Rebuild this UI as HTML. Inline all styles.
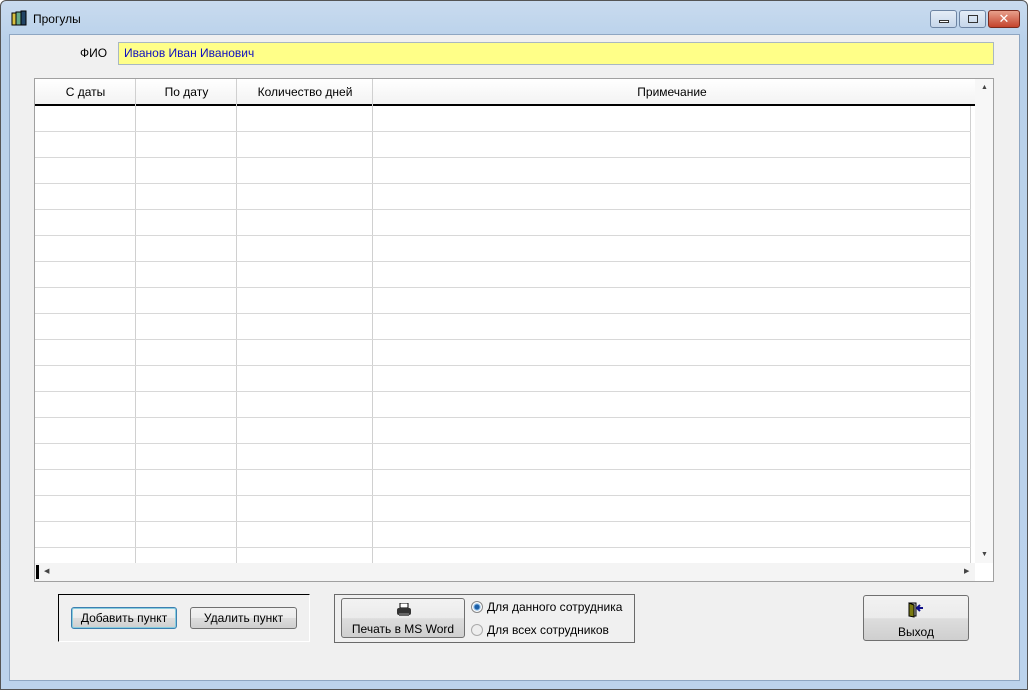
<!DOCTYPE html>
<html><head><meta charset="utf-8"><style>
*{margin:0;padding:0;box-sizing:border-box}
body{width:1028px;height:690px;overflow:hidden;background:#fff;font-family:"Liberation Sans","DejaVu Sans",sans-serif;font-size:12px;color:#000;position:relative}
.frame{position:absolute;left:0;top:0;width:1028px;height:690px;background:linear-gradient(#c9dbef,#b9d1ea 40px,#bcd3ec);border:1px solid #555;border-radius:6px 6px 0 0}
.client{position:absolute;left:9px;top:34px;width:1011px;height:647px;background:#f0f0f0;border:1px solid #8ea6c2}
.abs{position:absolute}
.title{left:33px;top:12px;font-size:12px}
.btnw{top:10px;height:18px;border:1px solid #6d84a3;border-radius:3px;background:linear-gradient(#e4edf7,#c6d6ea)}
.grid{left:34px;top:78px;width:960px;height:504px;background:#fff;border:1px solid #a0a0a0}
.hline{position:absolute;left:0;width:936px;height:1px;background:#d8d8d8}
.vline{position:absolute;top:0;width:1px;height:484px;background:#d0d0d0}
.hdr{position:absolute;top:0;height:27px;line-height:27px;text-align:center;font-size:12px}
.btn{position:absolute;border:1px solid #707070;border-radius:3px;background:linear-gradient(#f2f2f2 0,#ebebeb 50%,#dddddd 51%,#cfcfcf);text-align:center;font-size:12px}
</style></head><body>
<div class="frame"></div>
<svg class="abs" style="left:11px;top:10px" width="18" height="17" viewBox="0 0 18 17"><rect x="1" y="3" width="4" height="12" fill="#d8c040" stroke="#000"/><rect x="5" y="2" width="5" height="13" fill="#6a8" stroke="#000"/><rect x="10" y="1" width="5" height="14" fill="#246" stroke="#000"/></svg>
<div class="abs title">Прогулы</div>
<div class="abs btnw" style="left:930px;width:27px"><div class="abs" style="left:8px;top:9px;width:10px;height:3px;border:1px solid #333;background:#fff"></div></div>
<div class="abs btnw" style="left:959px;width:27px"><div class="abs" style="left:8px;top:4px;width:10px;height:8px;border:1px solid #333"></div></div>
<div class="abs btnw" style="left:988px;width:32px;background:linear-gradient(#e8a08c,#c4432c);border-color:#7a2a1e;color:#fff;font-weight:bold;text-align:center;line-height:16px;font-size:13px">✕</div>
<div class="client"></div>
<div class="abs" style="left:80px;top:46px">ФИО</div>
<div class="abs" style="left:118px;top:42px;width:876px;height:23px;background:#ffff88;border:1px solid #a9b8c2;color:#1010c0;line-height:21px;padding-left:5px">Иванов Иван Иванович</div>
<div class="abs grid">
 <div class="abs" style="left:0;top:0;width:940px;height:27px;background:linear-gradient(#fff,#f3f3f3);border-bottom:2px solid #000"></div>
 <div class="hdr" style="left:0;width:101px">С даты</div>
 <div class="hdr" style="left:101px;width:101px">По дату</div>
 <div class="hdr" style="left:202px;width:136px">Количество дней</div>
 <div class="hdr" style="left:338px;width:598px">Примечание</div>
 <div class="vline" style="left:100px"></div><div class="vline" style="left:201px"></div><div class="vline" style="left:337px"></div><div class="vline" style="left:935px;top:27px;height:457px"></div>
 <div class="hline" style="top:52px"></div><div class="hline" style="top:78px"></div><div class="hline" style="top:104px"></div><div class="hline" style="top:130px"></div><div class="hline" style="top:156px"></div><div class="hline" style="top:182px"></div><div class="hline" style="top:208px"></div><div class="hline" style="top:234px"></div><div class="hline" style="top:260px"></div><div class="hline" style="top:286px"></div><div class="hline" style="top:312px"></div><div class="hline" style="top:338px"></div><div class="hline" style="top:364px"></div><div class="hline" style="top:390px"></div><div class="hline" style="top:416px"></div><div class="hline" style="top:442px"></div><div class="hline" style="top:468px"></div>
 <div class="abs" style="left:940px;top:0;width:18px;height:484px;background:#f7f7f7"></div>
 <div class="abs" style="left:946px;top:5px;font-size:7px;color:#444">▲</div>
 <div class="abs" style="left:946px;top:472px;font-size:7px;color:#444">▼</div>
 <div class="abs" style="left:0;top:484px;width:940px;height:18px;background:#f4f4f4"></div>
 <div class="abs" style="left:1px;top:486px;width:3px;height:14px;background:#000"></div>
 <div class="abs" style="left:9px;top:488px;font-size:7px;color:#444">◀</div>
 <div class="abs" style="left:929px;top:488px;font-size:7px;color:#444">▶</div>
</div>
<div class="abs" style="left:58px;top:594px;width:252px;height:48px;border-left:1px solid #000;border-top:1px solid #000;border-right:1px solid #fff;border-bottom:1px solid #fff"></div>
<div class="btn" style="left:71px;top:607px;width:106px;height:22px;line-height:20px;border-color:#3c7fb1;box-shadow:inset 0 0 0 1px #8cd">Добавить пункт</div>
<div class="btn" style="left:190px;top:607px;width:107px;height:22px;line-height:20px">Удалить пункт</div>
<div class="abs" style="left:334px;top:594px;width:301px;height:49px;border:1px solid #6a6a6a"></div>
<div class="btn" style="left:341px;top:598px;width:124px;height:40px"><svg style="position:absolute;left:54px;top:4px" width="16" height="14" viewBox="0 0 16 14"><rect x="4" y="0" width="8" height="5" fill="#fff" stroke="#000"/><rect x="1" y="5" width="14" height="7" rx="2" fill="#333"/><rect x="3" y="10" width="10" height="3" fill="#666"/></svg><div style="position:absolute;left:0;right:0;top:23px">Печать в MS Word</div></div>
<div class="abs" style="left:471px;top:601px;width:12px;height:12px;border-radius:50%;border:1px solid #888;background:radial-gradient(#1c5fa8 30%,#7bb0e0 40%,#fff 60%)"></div>
<div class="abs" style="left:487px;top:600px">Для данного сотрудника</div>
<div class="abs" style="left:471px;top:624px;width:12px;height:12px;border-radius:50%;border:1px solid #aaa;background:#eee"></div>
<div class="abs" style="left:487px;top:623px">Для всех сотрудников</div>
<div class="btn" style="left:863px;top:595px;width:106px;height:46px"><svg style="position:absolute;left:43px;top:6px" width="18" height="16" viewBox="0 0 18 16"><rect x="2" y="1" width="7" height="13" fill="#bbb" stroke="#000"/><path d="M2 1 L7 3 L7 15 L2 14Z" fill="#7a7a10" stroke="#000"/><path d="M10 6 L16 6 M13 3 L10 6 L13 9" stroke="#10108a" stroke-width="2" fill="none"/></svg><div style="position:absolute;left:0;right:0;top:29px">Выход</div></div>
</body></html>
